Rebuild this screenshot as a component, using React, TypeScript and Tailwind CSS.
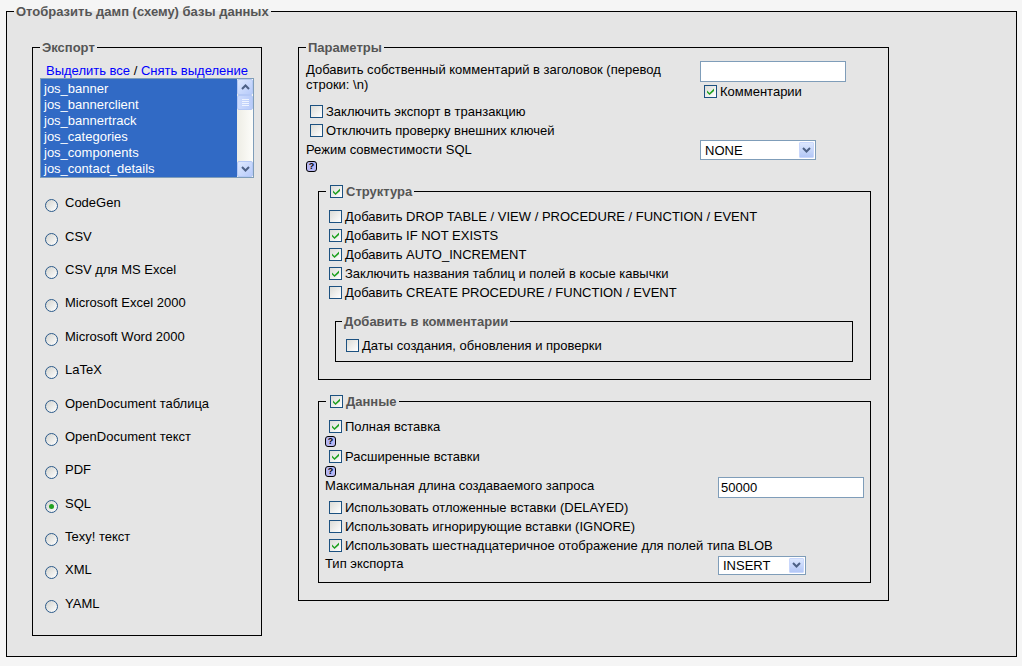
import clsx from 'clsx';

const FORMATS = [
  'CodeGen',
  'CSV',
  'CSV для MS Excel',
  'Microsoft Excel 2000',
  'Microsoft Word 2000',
  'LaTeX',
  'OpenDocument таблица',
  'OpenDocument текст',
  'PDF',
  'SQL',
  'Texy! текст',
  'XML',
  'YAML',
];

const TABLES = [
  'jos_banner',
  'jos_bannerclient',
  'jos_bannertrack',
  'jos_categories',
  'jos_components',
  'jos_contact_details',
];

// XP-style checkbox
function Checkbox({ checked = false }: { checked?: boolean }) {
  return (
    <span className="my-[3px] ml-[4px] mr-[3px] inline-flex h-[13px] w-[13px] shrink-0 items-center justify-center border border-[#1c5180] bg-linear-to-br from-[#dcdcd7] to-white">
      {checked && (
        <svg width="7" height="7" viewBox="0 0 7 7">
          <path d="M0 2.5 L2.5 5 L7 0.5 V3 L2.5 7 L0 4.5 Z" fill="#21a121" />
        </svg>
      )}
    </span>
  );
}

function Radio({ checked = false }: { checked?: boolean }) {
  return (
    <span className="ml-[5px] mt-[6px] inline-flex h-[13px] w-[13px] shrink-0 items-center justify-center rounded-full border border-[#2c5a8a] bg-linear-to-br from-[#d4d4cf] to-white">
      {checked && <span className="h-[5px] w-[5px] rounded-full bg-[#21a121]" />}
    </span>
  );
}

function Help() {
  return (
    <span className="flex h-[11px] w-[11px] items-center justify-center rounded-[3px] border border-black bg-[#b6b6f2] text-[9px] font-bold leading-none">
      ?
    </span>
  );
}

function Chevron({ up = false }: { up?: boolean }) {
  return (
    <svg width="9" height="6" viewBox="0 0 9 6">
      <path
        d={up ? 'M1 5 L4.5 1.5 L8 5' : 'M1 1 L4.5 4.5 L8 1'}
        fill="none"
        stroke="#4d6185"
        strokeWidth="2"
      />
    </svg>
  );
}

function Select({ value, className }: { value: string; className: string }) {
  return (
    <div className={clsx('flex shrink-0 border border-[#7f9db9] bg-white', className)}>
      <span className="flex flex-1 items-center pl-[4px]">{value}</span>
      <span className="my-[1px] mr-[1px] flex w-[15px] items-center justify-center rounded-[1px] border border-[#c9d7fc] bg-linear-to-b from-[#dce7fe] to-[#b3c7f6]">
        <Chevron />
      </span>
    </div>
  );
}

function TextInput({ value = '', className }: { value?: string; className: string }) {
  return (
    <div className={clsx('flex shrink-0 items-center border border-[#7f9db9] bg-white pl-[2px]', className)}>
      {value}
    </div>
  );
}

function CheckRow({ checked, label }: { checked?: boolean; label: string }) {
  return (
    <label className="flex h-[19px] items-center whitespace-nowrap">
      <Checkbox checked={checked} />
      {label}
    </label>
  );
}

function ScrollButton({ up = false }: { up?: boolean }) {
  return (
    <span className="flex h-[16px] w-[16px] items-center justify-center rounded-[2px] border border-[#b4c8f5] bg-linear-to-br from-[#dfe9fe] to-[#b6cafa]">
      <Chevron up={up} />
    </span>
  );
}

function ExportBox() {
  return (
    <fieldset className="w-[229px] shrink-0 border border-black">
      <legend className="ml-[7px] px-[2px] font-bold text-[#555]">Экспорт</legend>
      <div className="px-[7px] pb-[15px] pt-[8px]">
        <div className="h-[15px] text-center">
          <a className="text-[#0000ff]">Выделить все</a> / <a className="text-[#0000ff]">Снять выделение</a>
        </div>
        <div className="flex h-[100px] w-[214px] border border-[#7f9db9] bg-[#316ac5]">
          <div className="flex-1 pl-[3px] pt-[2px] leading-[16px] text-white">
            {TABLES.map((t) => (
              <div key={t}>{t}</div>
            ))}
          </div>
          <div className="flex w-[16px] flex-col bg-linear-to-r from-[#eeede5] to-[#fdfdfa]">
            <ScrollButton up />
            <span className="flex h-[15px] w-[16px] flex-col items-center justify-center gap-[1px] rounded-[2px] border border-[#b4c8f5] bg-linear-to-r from-[#cddbfd] to-[#b8cbf9]">
              <span className="h-[1px] w-[7px] bg-[#eef4ff]" />
              <span className="h-[1px] w-[7px] bg-[#eef4ff]" />
              <span className="h-[1px] w-[7px] bg-[#eef4ff]" />
              <span className="h-[1px] w-[7px] bg-[#eef4ff]" />
            </span>
            <div className="flex-1" />
            <ScrollButton />
          </div>
        </div>
        <div className="mt-[8px]">
          {FORMATS.map((f) => (
            <label key={f} className="flex h-[33.4px] items-center whitespace-nowrap">
              <Radio checked={f === 'SQL'} />
              <span className="ml-[7px]">{f}</span>
            </label>
          ))}
        </div>
      </div>
    </fieldset>
  );
}

function Params() {
  return (
    <fieldset className="w-[591px] shrink-0 border border-black">
      <legend className="ml-[7px] px-[2px] font-bold text-[#555]">Параметры</legend>
      <div className="pb-[17px] pl-[7px] pt-[6px]">
        {/* comment header */}
        <div className="mb-[1px] flex">
          <div className="w-[394px] shrink-0 pt-[1px]">
            Добавить собственный комментарий в заголовок (перевод
            <br />
            строки: \n)
          </div>
          <div>
            <TextInput className="h-[21px] w-[146px]" />
            <CheckRow checked label="Комментарии" />
          </div>
        </div>
        <CheckRow label="Заключить экспорт в транзакцию" />
        <CheckRow label="Отключить проверку внешних ключей" />
        <div className="flex">
          <div className="w-[394px] shrink-0 pt-[1.5px]">
            <div>Режим совместимости SQL</div>
            <div className="mt-[4px]">
              <Help />
            </div>
          </div>
          <Select value="NONE" className="h-[20px] w-[116px]" />
        </div>

        {/* Structure */}
        <fieldset className="ml-[12px] mt-[10px] w-[553px] border border-black">
          <legend className="ml-[7px] pr-[2px] font-bold text-[#555]">
            <span className="flex items-center">
              <Checkbox checked />
              Структура
            </span>
          </legend>
          <div className="pb-[17px] pl-[6px] pt-[6px]">
            <CheckRow label="Добавить DROP TABLE / VIEW / PROCEDURE / FUNCTION / EVENT" />
            <CheckRow checked label="Добавить IF NOT EXISTS" />
            <CheckRow checked label="Добавить AUTO_INCREMENT" />
            <CheckRow checked label="Заключить названия таблиц и полей в косые кавычки" />
            <CheckRow label="Добавить CREATE PROCEDURE / FUNCTION / EVENT" />
            <fieldset className="ml-[10px] mt-[12px] w-[518px] border border-black">
              <legend className="ml-[6px] px-[2px] font-bold text-[#555]">Добавить в комментарии</legend>
              <div className="pb-[5.5px] pl-[6px] pt-[7.5px]">
                <CheckRow label="Даты создания, обновления и проверки" />
              </div>
            </fieldset>
          </div>
        </fieldset>

        {/* Data */}
        <fieldset className="ml-[12px] mt-[12px] w-[553px] border border-black">
          <legend className="ml-[7px] pr-[2px] font-bold text-[#555]">
            <span className="flex items-center">
              <Checkbox checked />
              Данные
            </span>
          </legend>
          <div className="pb-[7.5px] pl-[6px] pt-[6px]">
            <CheckRow checked label="Полная вставка" />
            <div className="h-[11px]">
              <Help />
            </div>
            <CheckRow checked label="Расширенные вставки" />
            <div className="h-[11px]">
              <Help />
            </div>
            <div className="flex">
              <div className="w-[393px] shrink-0 pt-[1.5px]">Максимальная длина создаваемого запроса</div>
              <TextInput value="50000" className="h-[21px] w-[146px]" />
            </div>
            <CheckRow label="Использовать отложенные вставки (DELAYED)" />
            <CheckRow label="Использовать игнорирующие вставки (IGNORE)" />
            <CheckRow checked label="Использовать шестнадцатеричное отображение для полей типа BLOB" />
            <div className="mt-[1px] flex">
              <div className="w-[393px] shrink-0">Тип экспорта</div>
              <Select value="INSERT" className="h-[19px] w-[88px]" />
            </div>
          </div>
        </fieldset>
      </div>
    </fieldset>
  );
}

export default function App() {
  return (
    <div className="min-h-screen bg-[#f5f5f5] pl-[6px] pt-[4px] font-['Liberation_Sans',Arial,sans-serif] text-[13px] leading-[15px] text-black">
      <fieldset className="w-[1011px] border border-black bg-[#e5e5e5]">
        <legend className="ml-[7px] px-[2px] font-bold text-[#555]">Отобразить дамп (схему) базы данных</legend>
        <div className="flex items-start gap-[36px] pb-[20px] pl-[25px] pt-[21px]">
          <ExportBox />
          <Params />
        </div>
      </fieldset>
    </div>
  );
}
